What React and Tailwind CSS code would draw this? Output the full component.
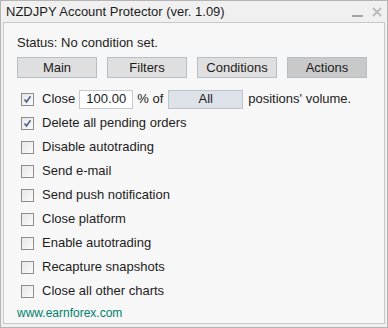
import React from "react";

function Check({ checked }) {
  return (
    <div className="w-[13px] h-[13px] border border-[#8e8e8e] bg-gradient-to-br from-[#e6e6e6] to-[#fbfbfb] flex items-center justify-center shrink-0">
      {checked && (
        <svg width="9" height="9" viewBox="0 0 9 9">
          <path d="M1.5 4.5 L3.5 7 L7.5 1.2" stroke="#4b5b85" strokeWidth="1.5" fill="none" />
        </svg>
      )}
    </div>
  );
}

function Row({ checked, children }) {
  return (
    <div className="h-[24px] flex items-center pl-[17px]">
      <Check checked={checked} />
      <div className="ml-[8px] flex items-center">{children}</div>
    </div>
  );
}

export default function App() {
  const tabs = ["Main", "Filters", "Conditions", "Actions"];
  const rows = [
    "Delete all pending orders",
    "Disable autotrading",
    "Send e-mail",
    "Send push notification",
    "Close platform",
    "Enable autotrading",
    "Recapture snapshots",
    "Close all other charts",
  ];
  return (
    <div
      className="w-[388px] h-[328px] bg-[#f0f0f0] border border-[#b4b4b4] text-[13px] text-[#1c1c1c] flex flex-col"
      style={{ fontFamily: '"Liberation Sans", Arial, sans-serif' }}
    >
      <div className="h-[21px] flex items-center justify-between pl-[5px] pr-[5px]">
        <span>NZDJPY Account Protector (ver. 1.09)</span>
        <div className="flex items-center">
          <div className="w-[11px] h-[2px] bg-[#a4a4a4] mt-[8px] mr-[9px]" />
          <svg width="10" height="10" viewBox="0 0 10 10">
            <path d="M1 1 L9 9 M9 1 L1 9" stroke="#bcbcbc" strokeWidth="2" />
          </svg>
        </div>
      </div>
      <div className="mx-[2px] h-[302px] border border-[#c8c8c8] bg-[#f7f7f7] flex flex-col">
        <div className="h-[20px] mt-[10px] flex items-center pl-[13px]">Status: No condition set.</div>
        <div className="flex gap-[10px] pl-[13px] mt-[4px]">
          {tabs.map((t) => (
            <div
              key={t}
              className={
                "w-[80px] h-[21px] border border-[#b6bec6] flex items-center justify-center " +
                (t === "Actions" ? "bg-[#c9c9c9]" : "bg-[#dfdfdf]")
              }
            >
              {t}
            </div>
          ))}
        </div>
        <div className="mt-[9px]">
          <Row checked>
            <span>Close</span>
            <div className="ml-[4px] w-[54px] h-[19px] bg-white border border-[#c3cad2] flex items-center justify-center">
              100.00
            </div>
            <span className="ml-[4px]">% of</span>
            <div className="ml-[5px] w-[75px] h-[19px] bg-[#dde2e8] border border-[#bcc4cc] flex items-center justify-center">
              All
            </div>
            <span className="ml-[5px]">positions' volume.</span>
          </Row>
          {rows.map((r, i) => (
            <Row key={r} checked={i === 0}>
              <span>{r}</span>
            </Row>
          ))}
        </div>
        <div className="h-[20px] flex items-center pl-[13px] text-[12px] text-[#00806e]">www.earnforex.com</div>
      </div>
    </div>
  );
}
